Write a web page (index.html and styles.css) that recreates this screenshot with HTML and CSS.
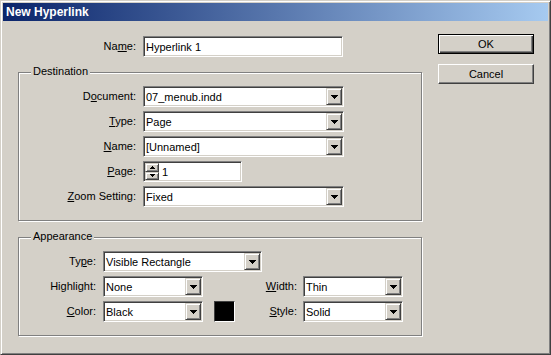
FILE: index.html
```html
<!DOCTYPE html>
<html lang="en">
<head>
  <meta charset="UTF-8" />
  <title>New Hyperlink</title>
  <link rel="stylesheet" href="styles.css">
</head>
<body>
  <div class="window">
    <div class="titlebar">New Hyperlink</div>

    <div class="dialog">
      <div class="main">
        <!-- name of the hyperlink -->
        <div class="row name-row">
          <label class="lbl">Na<u>m</u>e:</label>
          <div class="edit name-edit">Hyperlink 1</div>
        </div>

        <!-- Destination -->
        <div class="group dest">
          <span class="group-title">Destination</span>

          <label class="lbl">D<u>o</u>cument:</label>
          <div class="edit combo">
            <span class="val">07_menub.indd</span>
            <span class="drop"><svg width="7" height="4"><path d="M0 0h7v1H0zM1 1h5v1H1zM2 2h3v1H2zM3 3h1v1H3z"/></svg></span>
          </div>

          <label class="lbl"><u>T</u>ype:</label>
          <div class="edit combo">
            <span class="val">Page</span>
            <span class="drop"><svg width="7" height="4"><path d="M0 0h7v1H0zM1 1h5v1H1zM2 2h3v1H2zM3 3h1v1H3z"/></svg></span>
          </div>

          <label class="lbl"><u>N</u>ame:</label>
          <div class="edit combo">
            <span class="val">[Unnamed]</span>
            <span class="drop"><svg width="7" height="4"><path d="M0 0h7v1H0zM1 1h5v1H1zM2 2h3v1H2zM3 3h1v1H3z"/></svg></span>
          </div>

          <label class="lbl"><u>P</u>age:</label>
          <div class="edit spin-edit">
            <span class="spin">
              <span class="spin-btn"><svg width="5" height="3"><path d="M2 0h1v1H2zM1 1h3v1H1zM0 2h5v1H0z"/></svg></span>
              <span class="spin-btn"><svg width="5" height="3"><path d="M0 0h5v1H0zM1 1h3v1H1zM2 2h1v1H2z"/></svg></span>
            </span>
            <span class="val">1</span>
          </div>

          <label class="lbl"><u>Z</u>oom Setting:</label>
          <div class="edit combo">
            <span class="val">Fixed</span>
            <span class="drop"><svg width="7" height="4"><path d="M0 0h7v1H0zM1 1h5v1H1zM2 2h3v1H2zM3 3h1v1H3z"/></svg></span>
          </div>
        </div>

        <!-- Appearance -->
        <div class="group appear">
          <span class="group-title">Appearance</span>

          <label class="lbl">Ty<u>p</u>e:</label>
          <div class="edit combo type-combo">
            <span class="val">Visible Rectangle</span>
            <span class="drop"><svg width="7" height="4"><path d="M0 0h7v1H0zM1 1h5v1H1zM2 2h3v1H2zM3 3h1v1H3z"/></svg></span>
          </div>

          <label class="lbl">Hi<u>g</u>hlight:</label>
          <div class="edit combo">
            <span class="val">None</span>
            <span class="drop"><svg width="7" height="4"><path d="M0 0h7v1H0zM1 1h5v1H1zM2 2h3v1H2zM3 3h1v1H3z"/></svg></span>
          </div>
          <label class="lbl lbl-right"><u>W</u>idth:</label>
          <div class="edit combo">
            <span class="val">Thin</span>
            <span class="drop"><svg width="7" height="4"><path d="M0 0h7v1H0zM1 1h5v1H1zM2 2h3v1H2zM3 3h1v1H3z"/></svg></span>
          </div>

          <label class="lbl"><u>C</u>olor:</label>
          <div class="edit combo">
            <span class="val">Black</span>
            <span class="drop"><svg width="7" height="4"><path d="M0 0h7v1H0zM1 1h5v1H1zM2 2h3v1H2zM3 3h1v1H3z"/></svg></span>
          </div>
          <div class="swatch"></div>
          <label class="lbl lbl-right"><u>S</u>tyle:</label>
          <div class="edit combo">
            <span class="val">Solid</span>
            <span class="drop"><svg width="7" height="4"><path d="M0 0h7v1H0zM1 1h5v1H1zM2 2h3v1H2zM3 3h1v1H3z"/></svg></span>
          </div>
        </div>
      </div>

      <!-- OK / Cancel -->
      <div class="actions">
        <button class="btn default">OK</button>
        <button class="btn">Cancel</button>
      </div>
    </div>
  </div>
</body>
</html>
```

FILE: styles.css
```css
body {
  margin: 0;
  font-family: "Liberation Sans", Arial, sans-serif;
  font-size: 11px;
  color: #000;
  background: #d4d0c8;
}

/* classic raised window frame */
.window {
  width: 551px;
  height: 355px;
  box-sizing: border-box;
  border: 1px solid;
  border-color: #d4d0c8 #404040 #404040 #d4d0c8;
  box-shadow: inset 1px 1px #fff, inset -1px -1px #808080;
  padding: 2px;
  background: #d4d0c8;
}

.titlebar {
  height: 18px;
  line-height: 18px;
  padding-left: 3px;
  color: #fff;
  font-weight: bold;
  font-size: 12px;
  background: linear-gradient(to right, #0a246a, #a6caf0);
}

.dialog {
  display: flex;
  padding: 13px 0 0 15px;
}

.main {
  width: 404px;
  padding-top: 2px;
}

.row {
  display: flex;
  align-items: center;
  height: 21px;
}

.lbl {
  box-sizing: border-box;
  padding-right: 7px;
  text-align: right;
  line-height: 21px;
  white-space: nowrap;
}

.name-row {
  margin-bottom: 15px;
}

.name-row .lbl {
  width: 125px;
}

/* sunken text field */
.edit {
  box-sizing: border-box;
  height: 21px;
  border: 1px solid;
  border-color: #808080 #fff #fff #808080;
  box-shadow: inset 1px 1px #404040, inset -1px -1px #d4d0c8;
  background: #fff;
  display: flex;
  align-items: center;
  padding-left: 2px;
  white-space: nowrap;
}

.name-edit {
  width: 200px;
}

.combo .val {
  flex: 1;
}

.drop {
  box-sizing: border-box;
  width: 16px;
  height: 17px;
  margin-right: 1px;
  border: 1px solid;
  border-color: #d4d0c8 #404040 #404040 #d4d0c8;
  box-shadow: inset 1px 1px #fff, inset -1px -1px #808080;
  background: #d4d0c8;
  display: flex;
  align-items: center;
  justify-content: center;
}

.drop svg,
.spin-btn svg {
  shape-rendering: crispEdges;
}

.spin-edit {
  width: 99px;
  padding-left: 1px;
}

.spin {
  display: flex;
  flex-direction: column;
  width: 14px;
  height: 17px;
  margin-right: 3px;
}

.spin-btn {
  flex: 1;
  box-sizing: border-box;
  border: 1px solid;
  border-color: #d4d0c8 #404040 #404040 #d4d0c8;
  box-shadow: inset 1px 1px #fff, inset -1px -1px #808080;
  background: #d4d0c8;
  display: flex;
  align-items: center;
  justify-content: center;
}

/* etched group box */
.group {
  position: relative;
  border: 1px solid #808080;
  box-shadow: inset 1px 1px #fff, 1px 1px #fff;
  padding: 13px 0;
  display: grid;
  grid-auto-rows: 21px;
  row-gap: 4px;
}

.group-title {
  position: absolute;
  top: -8px;
  left: 12px;
  padding: 0 2px;
  line-height: 13px;
  background: #d4d0c8;
}

.dest {
  grid-template-columns: 124px 201px;
  margin-bottom: 16px;
}

.appear {
  grid-template-columns: 84px 111px 22px 67px 100px;
}

.appear .combo {
  width: 100px;
}

.appear .type-combo {
  grid-column: 2 / 6;
  width: 159px;
}

.lbl-right {
  grid-column: 4;
  padding-right: 6px;
}

.swatch {
  box-sizing: border-box;
  width: 21px;
  height: 21px;
  border: 1px solid;
  border-color: #404040 #fff #fff #404040;
  background: #000;
}

.actions {
  display: flex;
  flex-direction: column;
  gap: 10px;
  margin-left: 16px;
}

.btn {
  box-sizing: border-box;
  width: 96px;
  height: 20px;
  padding: 0;
  font: inherit;
  color: #000;
  background: #d4d0c8;
  border: 1px solid;
  border-color: #fff #404040 #404040 #fff;
  box-shadow: inset -1px -1px #808080;
}

.btn.default {
  border-color: #000;
  box-shadow: inset 1px 1px #fff, inset -1px -1px #404040, inset -2px -2px #808080;
}
```
